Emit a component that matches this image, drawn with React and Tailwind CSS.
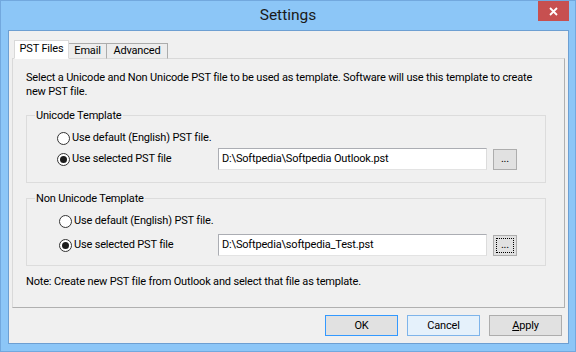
import React from 'react';

function Radio({ checked }) {
  return (
    <span className="w-[13px] h-[13px] rounded-full border border-[#333] bg-white flex items-center justify-center shrink-0">
      {checked && <span className="w-[7px] h-[7px] rounded-full bg-[#1c1c1c]" />}
    </span>
  );
}

function Option({ label, checked }) {
  return (
    <span className="flex items-center gap-[2px]">
      <Radio checked={checked} />
      <span>{label}</span>
    </span>
  );
}

function Browse({ focused }) {
  return (
    <button className="w-[24px] h-[21px] ml-[6px] bg-[#e1e1e1] border border-[#adadad] p-[2px] flex">
      <span className={`flex-1 flex items-end justify-center leading-[13px] pb-[1px] ${focused ? 'border border-dotted border-black' : 'border border-transparent'}`}>
        ...
      </span>
    </button>
  );
}

function Group({ title, path, indent, labelWidth, focused, gap }) {
  return (
    <div className="relative border border-[#dcdcdc] h-[68px] flex flex-col pt-[12px]">
      <span className="absolute left-[8px] -top-[8px] px-[1px] bg-[#f0f0f0] leading-[15px]">{title}</span>
      <div className={`h-[20px] flex items-center ${indent}`}>
        <Option label="Use default (English) PST file." />
      </div>
      <div className={`h-[22px] flex items-center ${indent} ${gap}`}>
        <span className={`${labelWidth} shrink-0 flex`}>
          <Option label="Use selected PST file" checked />
        </span>
        <span className="w-[269px] h-[22px] bg-white border border-[#abadb3] border-b-[#e3e3e3] border-r-[#dcdcdc] flex items-center pl-[3px]">
          {path}
        </span>
        <Browse focused={focused} />
      </div>
    </div>
  );
}

function DialogButton({ children, kind }) {
  const styles = {
    default: 'bg-[#e1e1e1] border-[#3399ff]',
    hover: 'bg-[#e5f1fb] border-[#7eb4ea]',
    normal: 'bg-[#e1e1e1] border-[#adadad]',
  };
  return (
    <button className={`w-[73px] h-[21px] border ${styles[kind]} flex items-center justify-center leading-none`}>
      {children}
    </button>
  );
}

export default function App() {
  return (
    <div
      className="w-[576px] h-[352px] bg-[#8cc6f7] border border-[#72a8de] flex flex-col text-[11px] text-black tracking-[-0.17px]"
      style={{ fontFamily: 'Roboto, "Liberation Sans", sans-serif' }}
    >
      {/* Title bar */}
      <div className="h-[29px] relative flex items-center justify-center shrink-0">
        <span className="text-[15.5px] text-[#1a1a1a] tracking-normal">Settings</span>
        <span className="absolute right-[6px] top-0 w-[31px] h-[20px] bg-[#c75050] flex items-center justify-center">
          <svg width="9" height="9" viewBox="0 0 9 9">
            <path d="M1 1L8 8M8 1L1 8" stroke="white" strokeWidth="1.8" />
          </svg>
        </span>
      </div>

      {/* Client area */}
      <div className="flex-1 ml-[7px] mr-[6px] mb-[7px] bg-[#f0f0f0] border border-[#6d9fd2] flex flex-col pt-[9px] px-[3px]">
        {/* Tabs */}
        <div className="flex items-end h-[19px] pl-[2px] -mb-px relative z-10">
          <div className="w-[55px] h-[19px] bg-white border border-[#d9d9d9] border-b-white flex items-center justify-center">
            PST Files
          </div>
          <div className="w-[38px] h-[16px] bg-[#ededed] border border-[#acacac] border-l-0 border-b-[#d9d9d9] flex items-center justify-center">
            Email
          </div>
          <div className="w-[61px] h-[16px] bg-[#ededed] border border-[#acacac] border-l-0 border-b-[#d9d9d9] flex items-center justify-center">
            Advanced
          </div>
        </div>

        {/* Tab panel */}
        <div className="h-[250px] bg-[#f0f0f0] border border-[#d9d9d9] border-r-[#b0b0b0] border-b-[#b0b0b0] flex flex-col px-[13px] pt-[12px]">
          <p className="leading-[14px] w-[520px]">
            Select a Unicode and Non Unicode PST file to be used as template. Software will use this template to create new PST file.
          </p>
          <div className="mt-[16px] w-[520px]">
            <Group
              title="Unicode Template"
              path={'D:\\Softpedia\\Softpedia Outlook.pst'}
              indent="pl-[30px]"
              labelWidth="w-[161px]"
              gap=""
            />
          </div>
          <div className="mt-[15px] w-[520px]">
            <Group
              title="Non Unicode Template"
              path={'D:\\Softpedia\\softpedia_Test.pst'}
              indent="pl-[32px]"
              labelWidth="w-[159px]"
              gap="mt-[3px]"
              focused
            />
          </div>
          <p className="mt-[8px] leading-[15px]">
            Note: Create new PST file from Outlook and select that file as template.
          </p>
        </div>

        {/* Dialog buttons */}
        <div className="flex justify-end gap-[9px] mt-[7px] pr-[3px]">
          <DialogButton kind="default">OK</DialogButton>
          <DialogButton kind="hover">Cancel</DialogButton>
          <DialogButton kind="normal">
            <span><span className="underline">A</span>pply</span>
          </DialogButton>
        </div>
      </div>
    </div>
  );
}
